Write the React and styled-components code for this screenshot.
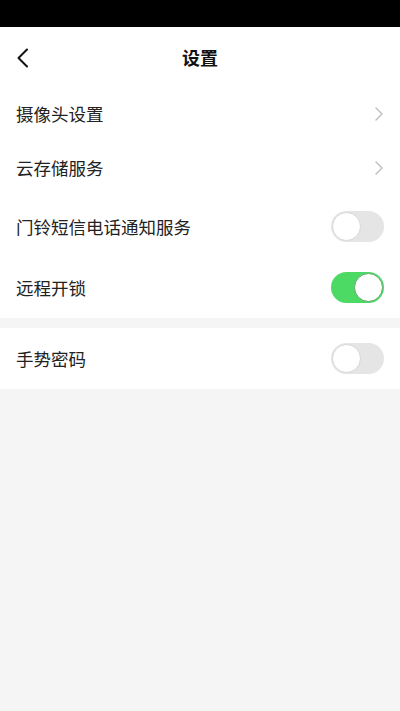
import styled, { createGlobalStyle } from 'styled-components';

const GlobalStyle = createGlobalStyle`
  html, body {
    margin: 0;
    padding: 0;
    background: #f5f5f5;
    font-family: "Noto Sans CJK SC", "Noto Sans", sans-serif;
  }
`;

const Page = styled.div`
  width: 400px;
  min-height: 711px;
  background: #f5f5f5;
`;

const StatusBar = styled.div`
  height: 27px;
  background: #000;
`;

const Header = styled.header`
  height: 61px;
  display: flex;
  align-items: center;
  justify-content: center;
  position: relative;
  background: #fff;
`;

const BackButton = styled.button`
  position: absolute;
  left: 12px;
  top: 50%;
  transform: translateY(-50%);
  border: none;
  background: none;
  padding: 4px;
  display: flex;
  cursor: pointer;
`;

const Title = styled.h1`
  margin: 0 0 2px;
  font-size: 18px;
  font-weight: 700;
  color: #111;
`;

const Group = styled.section`
  background: #fff;
  margin-bottom: ${p => (p.$gap ? '10px' : '0')};
`;

const Row = styled.div`
  height: ${p => (p.$tall ? '61px' : '54px')};
  box-sizing: border-box;
  display: flex;
  align-items: center;
  justify-content: space-between;
  padding: 0 16px ${p => (p.$tall ? '0' : '3px')};
`;

const Label = styled.span`
  font-size: 17.5px;
  color: #222;
`;

const Track = styled.div`
  width: 53px;
  height: 31px;
  border-radius: 16px;
  box-sizing: border-box;
  background: ${p => (p.$on ? '#4cd964' : '#e5e5e5')};
  display: flex;
  align-items: center;
  justify-content: ${p => (p.$on ? 'flex-end' : 'flex-start')};
  padding: 1px;
`;

const Knob = styled.div`
  width: 29px;
  height: 29px;
  border-radius: 50%;
  background: #fff;
  box-sizing: border-box;
  border: 1px solid ${p => (p.$on ? '#5aa86a' : '#d6d6d6')};
`;

const Chevron = () => (
  <svg width="10" height="16" viewBox="0 0 10 16">
    <path d="M2 2 L8 8 L2 14" fill="none" stroke="#bdbdbd" strokeWidth="1.4" strokeLinecap="round" strokeLinejoin="round" />
  </svg>
);

const Toggle = ({ on }) => (
  <Track $on={on}>
    <Knob $on={on} />
  </Track>
);

const App = () => (
  <Page>
    <GlobalStyle />
    <StatusBar />
    <Header>
      <BackButton>
        <svg width="14" height="20" viewBox="0 0 14 20">
          <path d="M11 1.5 L2.5 10 L11 18.5" fill="none" stroke="#111" strokeWidth="2" strokeLinecap="round" strokeLinejoin="round" />
        </svg>
      </BackButton>
      <Title>设置</Title>
    </Header>
    <Group $gap>
      <Row>
        <Label>摄像头设置</Label>
        <Chevron />
      </Row>
      <Row>
        <Label>云存储服务</Label>
        <Chevron />
      </Row>
      <Row $tall>
        <Label>门铃短信电话通知服务</Label>
        <Toggle on={false} />
      </Row>
      <Row $tall>
        <Label>远程开锁</Label>
        <Toggle on />
      </Row>
    </Group>
    <Group>
      <Row $tall>
        <Label>手势密码</Label>
        <Toggle on={false} />
      </Row>
    </Group>
  </Page>
);

export default App;
